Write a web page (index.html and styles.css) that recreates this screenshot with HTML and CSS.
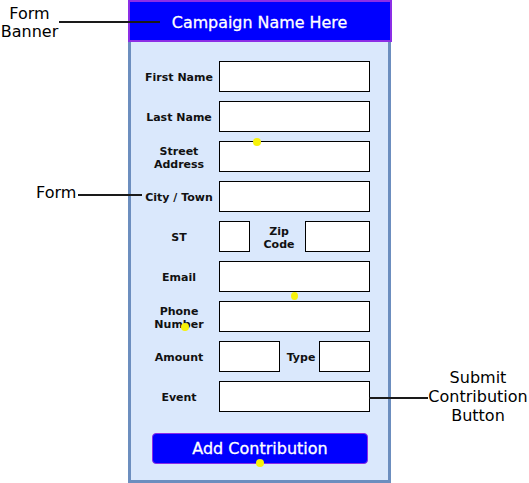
FILE: index.html
```html
<!DOCTYPE html>
<html lang="en">
<head>
    <meta charset="UTF-8">
    <meta name="viewport" content="width=device-width, initial-scale=1.0">
    <title>Contribution Form Wireframe</title>
    <link rel="stylesheet" href="styles.css">
</head>
<body>
    <div class="canvas">
        <div class="form-card">
            <div class="banner">Campaign Name Here</div>

            <div class="panel">
                <div class="row">
                    <span class="lbl">First Name</span>
                    <span class="field"></span>
                </div>
                <div class="row">
                    <span class="lbl">Last Name</span>
                    <span class="field"></span>
                </div>
                <div class="row">
                    <span class="lbl">Street<br>Address</span>
                    <span class="field"></span>
                </div>
                <div class="row">
                    <span class="lbl">City / Town</span>
                    <span class="field"></span>
                </div>
                <div class="row">
                    <span class="lbl">ST</span>
                    <div class="pair">
                        <span class="field st"></span>
                        <span class="lbl">Zip<br>Code</span>
                        <span class="field zip"></span>
                    </div>
                </div>
                <div class="row">
                    <span class="lbl">Email</span>
                    <span class="field"></span>
                </div>
                <div class="row">
                    <span class="lbl">Phone<br>Number</span>
                    <span class="field"></span>
                </div>
                <div class="row">
                    <span class="lbl">Amount</span>
                    <div class="pair">
                        <span class="field amount"></span>
                        <span class="lbl">Type</span>
                        <span class="field type"></span>
                    </div>
                </div>
                <div class="row">
                    <span class="lbl">Event</span>
                    <span class="field"></span>
                </div>

                <button class="submit">Add Contribution</button>
            </div>
        </div>

        <!-- callouts -->
        <div class="note note-banner">Form<br>Banner</div>
        <div class="connector conn-banner"></div>

        <div class="note note-form">Form</div>
        <div class="connector conn-form"></div>

        <div class="note note-submit">Submit<br>Contribution<br>Button</div>
        <div class="connector conn-submit"></div>

        <!-- handles -->
        <span class="dot dot-1"></span>
        <span class="dot dot-2"></span>
        <span class="dot dot-3"></span>
        <span class="dot dot-4"></span>
    </div>
</body>
</html>
```

FILE: styles.css
```css
* {
    margin: 0;
    padding: 0;
    box-sizing: border-box;
    font-family: 'DejaVu Sans', Verdana, sans-serif;
}

body {
    background: #fff;
    color: #000;
}

.canvas {
    position: relative;
    width: 529px;
    height: 483px;
    overflow: hidden;
}

.form-card {
    width: 264px;
    margin-left: 128px;
}

.banner {
    height: 42px;
    background: #0000ff;
    border: 2px solid #8c2ee6;
    color: #fff;
    font-size: 15.9px;
    -webkit-text-stroke: 0.3px #fff;
    display: flex;
    align-items: center;
    justify-content: center;
    padding: 3px 1px 0 0;
}

.panel {
    width: 263px;
    background: #dae8fc;
    border: 3px solid #6c8ebf;
    border-top: none;
    padding: 19px 0 16px;
    display: flex;
    flex-direction: column;
    gap: 9px;
}

.row {
    display: grid;
    grid-template-columns: 80px 151px;
    align-items: center;
    padding-left: 8px;
    height: 31px;
}

.lbl {
    font-size: 11px;
    font-weight: bold;
    line-height: 13px;
    text-align: center;
    color: #111;
    padding-top: 2px;
}

.field {
    display: block;
    height: 31px;
    background: #fff;
    border: 1px solid #000;
}

.pair {
    display: flex;
    align-items: center;
}

.pair .lbl {
    flex: 1;
    padding-left: 3px;
}

.field.st { width: 31px; }
.field.zip { width: 65px; }
.field.amount { width: 61px; }
.field.type { width: 51px; }

.submit {
    margin: 12px 0 0 21px;
    width: 216px;
    height: 31px;
    background: #0000ff;
    border: 1px solid #8c2ee6;
    border-radius: 4px;
    color: #fff;
    font-size: 16px;
    -webkit-text-stroke: 0.3px #fff;
    cursor: pointer;
}

.note {
    position: absolute;
    font-size: 16px;
    line-height: 18px;
    text-align: center;
}

.note-banner {
    left: 0;
    top: 5px;
    width: 59px;
}

.note-form {
    left: 36px;
    top: 184px;
}

.note-submit {
    left: 428px;
    top: 368px;
    width: 100px;
    line-height: 19px;
}

.connector {
    position: absolute;
    height: 2px;
    background: #1a1a1a;
}

.conn-banner {
    left: 59px;
    top: 21px;
    width: 101px;
}

.conn-form {
    left: 78px;
    top: 194px;
    width: 64px;
}

.conn-submit {
    left: 369px;
    top: 397px;
    width: 59px;
}

.dot {
    position: absolute;
    width: 8px;
    height: 8px;
    border-radius: 50%;
    background: #f7f20a;
}

.dot-1 { left: 253px; top: 138px; }
.dot-2 { left: 181px; top: 323px; }
.dot-3 { left: 256px; top: 459px; }
.dot-4 { left: 291px; top: 292px; width: 7px; }
```
